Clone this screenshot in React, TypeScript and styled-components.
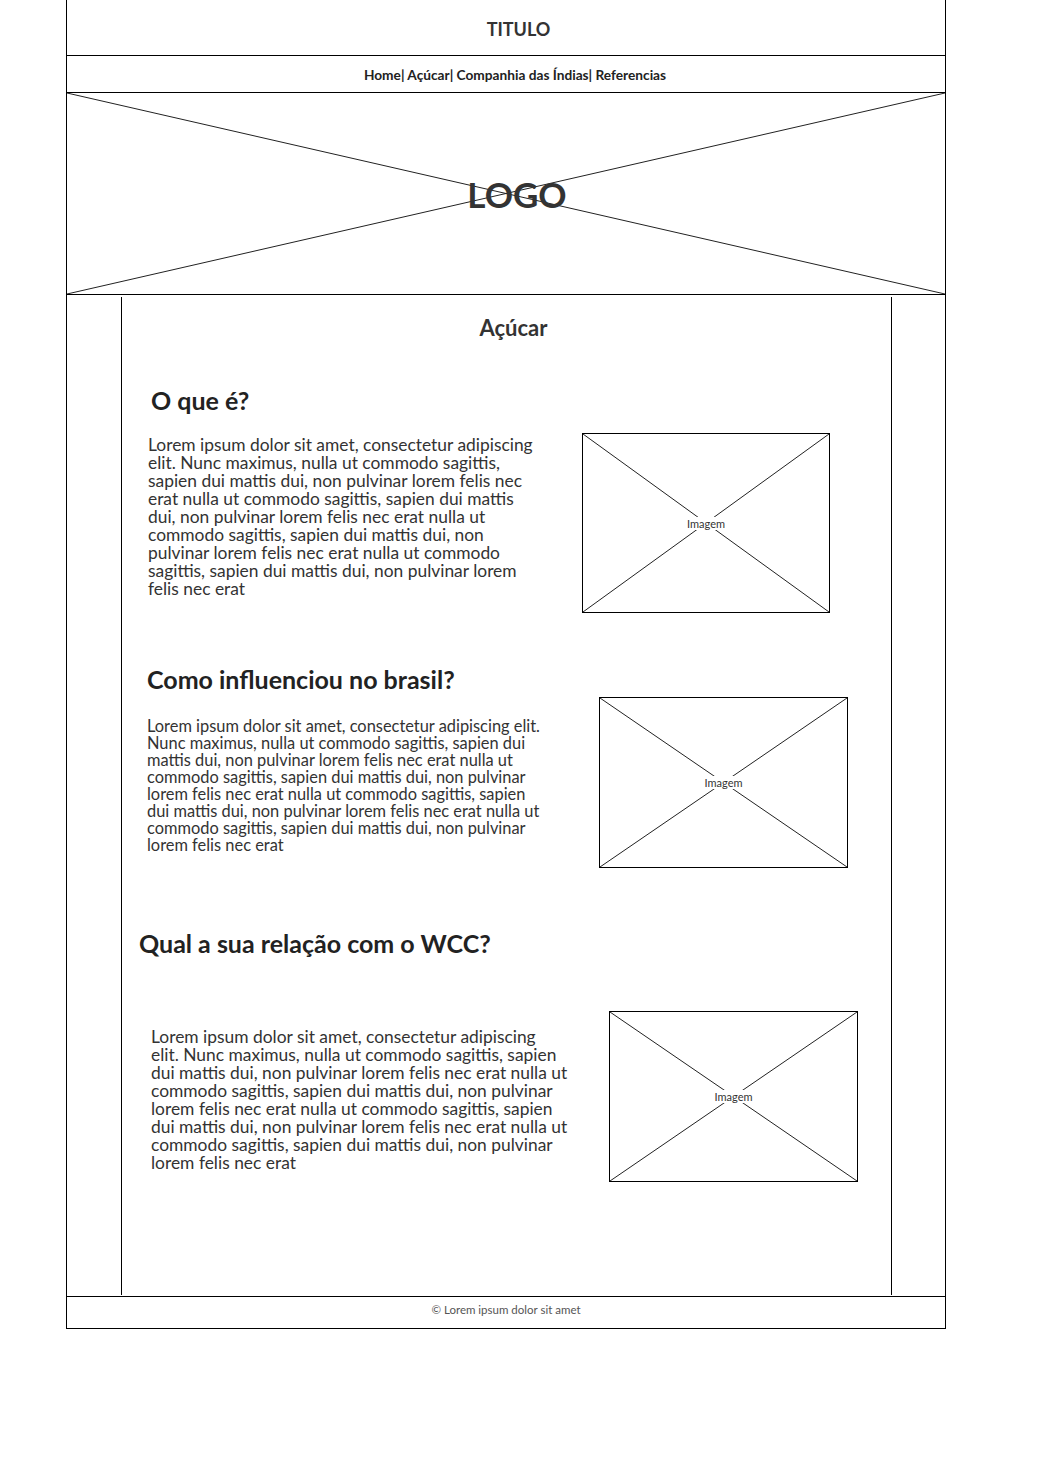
import React from 'react';
import styled, { createGlobalStyle } from 'styled-components';

const GlobalStyle = createGlobalStyle`
  *, *::before, *::after { box-sizing: border-box; }
  html, body { margin: 0; padding: 0; background: #fff; }
  body { font-family: Lato, "Liberation Sans", sans-serif; color: #333; }
`;

const Page = styled.div`
  width: 880px;
  margin-left: 66px;
  border-left: 1px solid #000;
  border-right: 1px solid #000;
`;

const Header = styled.header`
  height: 56px;
  padding: 3px 0 0 25px;
  border-bottom: 1px solid #000;
  display: flex;
  align-items: center;
  justify-content: center;
`;

const SiteTitle = styled.h1`
  margin: 0;
  font-size: 18px;
  line-height: 22px;
  font-weight: 700;
  color: #333;
`;

const Nav = styled.nav`
  height: 37px;
  padding-left: 18px;
  border-bottom: 1px solid #000;
  display: flex;
  align-items: center;
  justify-content: center;
  font-size: 13.7px;
  font-weight: 700;
  color: #222;
`;

const LogoBox = styled.div`
  position: relative;
  height: 202px;
  padding-left: 22px;
  border-bottom: 1px solid #000;
  display: flex;
  align-items: center;
  justify-content: center;
`;

const Cross = styled.svg`
  position: absolute;
  inset: 0;
  width: 100%;
  height: 100%;
`;

const LogoText = styled.span`
  position: relative;
  font-size: 35px;
  line-height: 40px;
  font-weight: 700;
  color: #333;
`;

const Main = styled.main`
  height: 1001px;
  padding: 2px 0 1px 54px;
  display: flex;
`;

const Column = styled.section`
  width: 771px;
  border-left: 1px solid #000;
  border-right: 1px solid #000;
`;

const PageTitle = styled.h2`
  margin: 16px 0 0;
  padding-left: 14px;
  text-align: center;
  font-size: 22px;
  line-height: 29px;
  font-weight: 700;
  color: #333;
`;

const Section = styled.article<{ $top: number }>`
  display: flex;
  align-items: flex-start;
  margin-top: ${(p) => p.$top}px;
`;

const TextCol = styled.div`
  flex: 1;
  min-width: 0;
`;

const Heading = styled.h3<{ $x: number }>`
  margin: 0 0 0 ${(p) => p.$x}px;
  font-size: 25px;
  line-height: 30px;
  font-weight: 700;
  color: #222;
  white-space: nowrap;
`;

const Para = styled.p<{ $x: number; $gap: number; $size: number; $lh: number }>`
  margin: ${(p) => p.$gap}px 0 0 ${(p) => p.$x}px;
  font-size: ${(p) => p.$size}px;
  line-height: ${(p) => p.$lh}px;
  color: #333;
`;

const Line = styled.span`
  display: block;
  white-space: nowrap;
`;

const Figure = styled.div<{ $w: number; $h: number; $top: number; $right: number }>`
  position: relative;
  flex: none;
  width: ${(p) => p.$w}px;
  height: ${(p) => p.$h}px;
  margin: ${(p) => p.$top}px ${(p) => p.$right}px 0 auto;
  border: 1px solid #000;
  display: flex;
  align-items: center;
  justify-content: center;
`;

const FigureLabel = styled.span`
  position: relative;
  background: #fff;
  padding: 0 1px;
  font-size: 11px;
  line-height: 13px;
  color: #333;
`;

const Footer = styled.footer`
  height: 33px;
  padding-bottom: 6px;
  border-top: 1px solid #000;
  border-bottom: 1px solid #000;
  display: flex;
  align-items: center;
  justify-content: center;
  font-size: 11.5px;
  color: #555;
`;

const XLines = () => (
  <Cross viewBox="0 0 100 100" preserveAspectRatio="none">
    <line x1="0" y1="0" x2="100" y2="100" stroke="#222" strokeWidth="1" vectorEffect="non-scaling-stroke" />
    <line x1="100" y1="0" x2="0" y2="100" stroke="#222" strokeWidth="1" vectorEffect="non-scaling-stroke" />
  </Cross>
);

type Sec = {
  title: string;
  top: number;
  hx: number;
  px: number;
  gap: number;
  size: number;
  lh: number;
  lines: string[];
  fig: { w: number; h: number; top: number; right: number };
};

const sections: Sec[] = [
  {
    title: 'O que é?',
    top: 43,
    hx: 29,
    px: 26,
    gap: 21,
    size: 17.4,
    lh: 18,
    lines: [
      'Lorem ipsum dolor sit amet, consectetur adipiscing',
      'elit. Nunc maximus, nulla ut commodo sagittis,',
      'sapien dui mattis dui, non pulvinar lorem felis nec',
      'erat nulla ut commodo sagittis, sapien dui mattis',
      'dui, non pulvinar lorem felis nec erat nulla ut',
      'commodo sagittis, sapien dui mattis dui, non',
      'pulvinar lorem felis nec erat nulla ut commodo',
      'sagittis, sapien dui mattis dui, non pulvinar lorem',
      'felis nec erat',
    ],
    fig: { w: 248, h: 180, top: 48, right: 61 },
  },
  {
    title: 'Como influenciou no brasil?',
    top: 51,
    hx: 25,
    px: 25,
    gap: 23,
    size: 16.4,
    lh: 17,
    lines: [
      'Lorem ipsum dolor sit amet, consectetur adipiscing elit.',
      'Nunc maximus, nulla ut commodo sagittis, sapien dui',
      'mattis dui, non pulvinar lorem felis nec erat nulla ut',
      'commodo sagittis, sapien dui mattis dui, non pulvinar',
      'lorem felis nec erat nulla ut commodo sagittis, sapien',
      'dui mattis dui, non pulvinar lorem felis nec erat nulla ut',
      'commodo sagittis, sapien dui mattis dui, non pulvinar',
      'lorem felis nec erat',
    ],
    fig: { w: 249, h: 171, top: 33, right: 43 },
  },
  {
    title: 'Qual a sua relação com o WCC?',
    top: 60,
    hx: 17,
    px: 29,
    gap: 70,
    size: 17.4,
    lh: 18,
    lines: [
      'Lorem ipsum dolor sit amet, consectetur adipiscing',
      'elit. Nunc maximus, nulla ut commodo sagittis, sapien',
      'dui mattis dui, non pulvinar lorem felis nec erat nulla ut',
      'commodo sagittis, sapien dui mattis dui, non pulvinar',
      'lorem felis nec erat nulla ut commodo sagittis, sapien',
      'dui mattis dui, non pulvinar lorem felis nec erat nulla ut',
      'commodo sagittis, sapien dui mattis dui, non pulvinar',
      'lorem felis nec erat',
    ],
    fig: { w: 249, h: 171, top: 83, right: 33 },
  },
];

export default function App() {
  return (
    <>
      <GlobalStyle />
      <Page>
        <Header>
          <SiteTitle>TITULO</SiteTitle>
        </Header>
        <Nav>Home| Açúcar| Companhia das Índias| Referencias</Nav>
        <LogoBox>
          <XLines />
          <LogoText>LOGO</LogoText>
        </LogoBox>
        <Main>
          <Column>
            <PageTitle>Açúcar</PageTitle>
            {sections.map((s) => (
              <Section key={s.title} $top={s.top}>
                <TextCol>
                  <Heading $x={s.hx}>{s.title}</Heading>
                  <Para $x={s.px} $gap={s.gap} $size={s.size} $lh={s.lh}>
                    {s.lines.map((l, i) => (
                      <Line key={i}>{l}</Line>
                    ))}
                  </Para>
                </TextCol>
                <Figure $w={s.fig.w} $h={s.fig.h} $top={s.fig.top} $right={s.fig.right}>
                  <XLines />
                  <FigureLabel>Imagem</FigureLabel>
                </Figure>
              </Section>
            ))}
          </Column>
        </Main>
        <Footer>© Lorem ipsum dolor sit amet</Footer>
      </Page>
    </>
  );
}
